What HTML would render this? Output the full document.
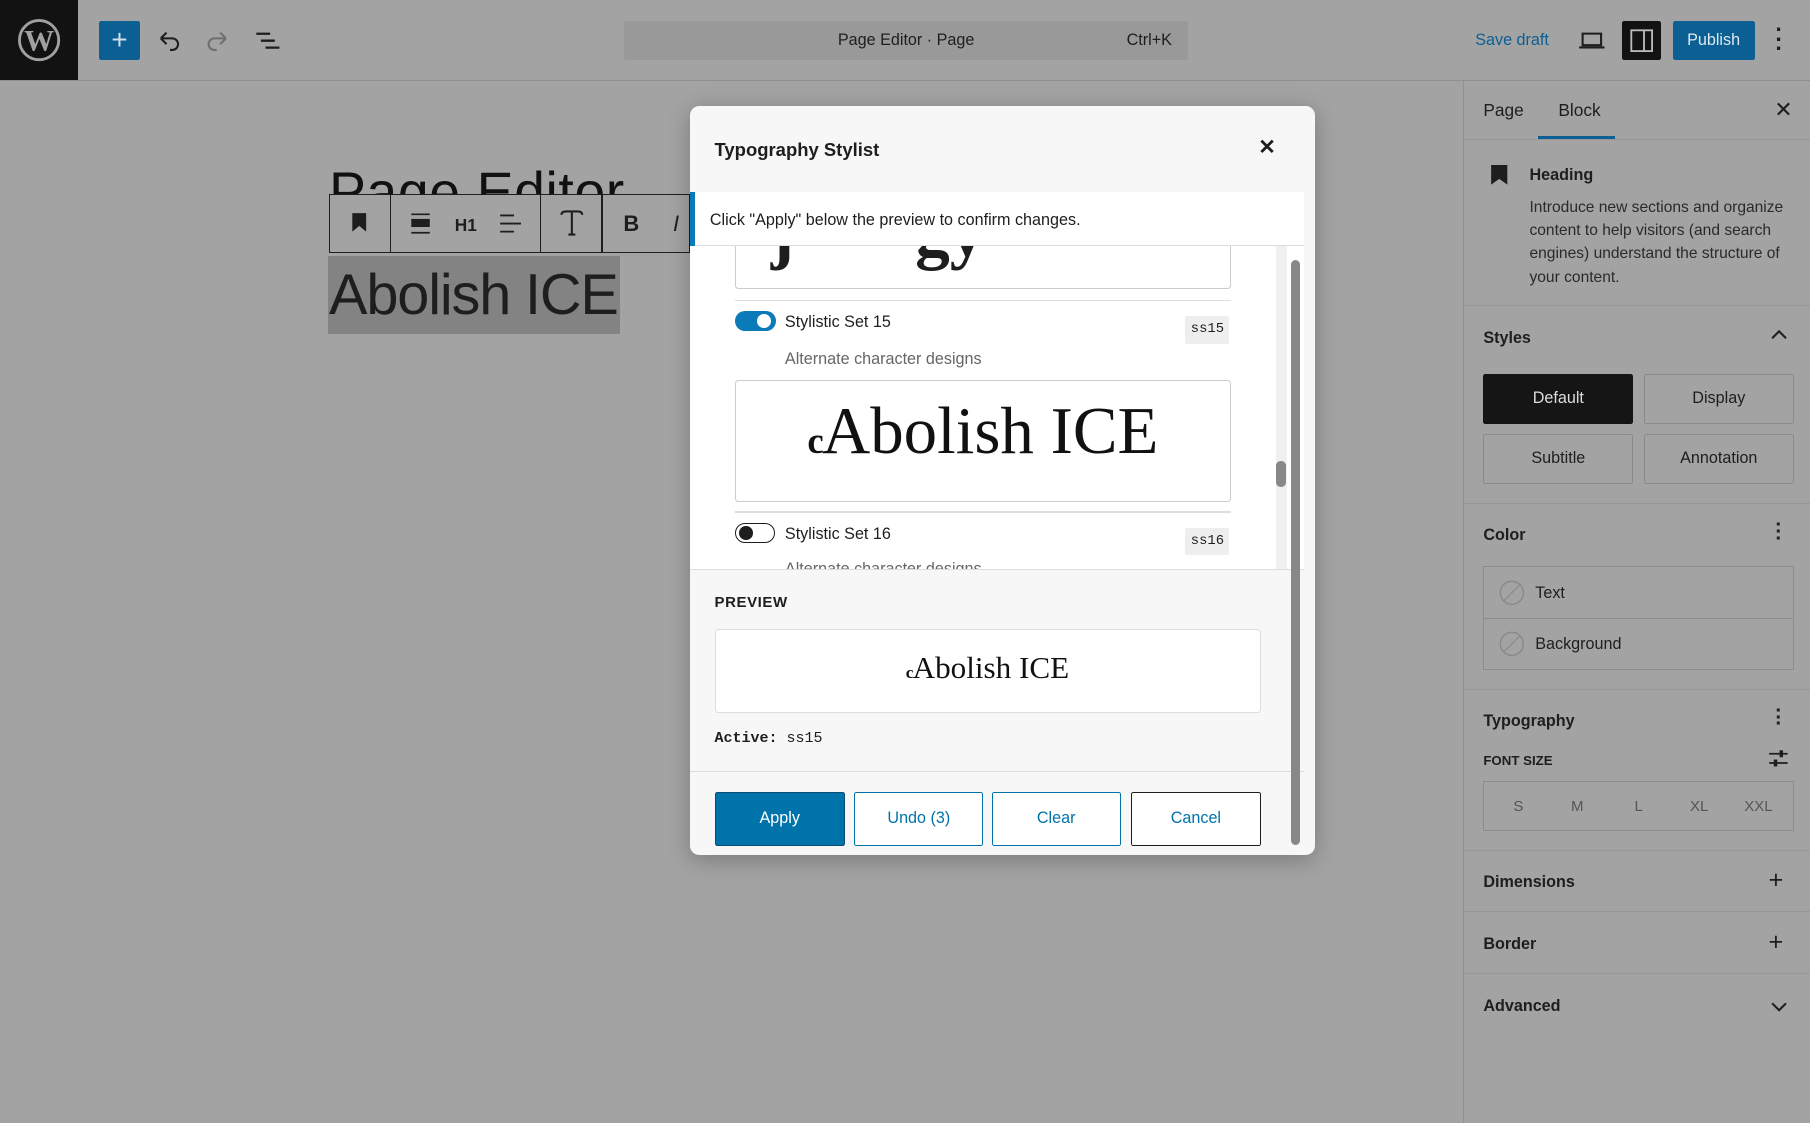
<!DOCTYPE html>
<html><head><meta charset="utf-8"><style>
html{zoom:1.154337}
body{margin:0;width:1568px;height:973px;overflow:hidden;background:#a3a3a3;font-family:"Liberation Sans",sans-serif;position:relative;color:#1e1e1e}
.a{position:absolute}
.t{font-size:14px}
.line{position:absolute;left:1268px;width:300px;height:1px;background:#979797}
.btn{position:absolute;box-sizing:border-box;border:1px solid #8a8a8a;border-radius:2px;text-align:center;font-size:14px;line-height:41px;height:43px}
.mb{position:absolute;box-sizing:border-box;height:47px;top:686px;font-size:14px;line-height:45px;text-align:center;border:1px solid #0073aa;color:#0073aa;border-radius:2px;background:#fff}
.sw{font-size:.55em;font-weight:bold;margin-right:-0.05em}
</style></head><body>
<div class="a" style="left:0;top:0;width:68px;height:69px;background:#121212"></div>
<svg class="a" style="left:14px;top:15px" width="40" height="40" viewBox="0 0 40 40"><circle cx="20" cy="20" r="17" fill="none" stroke="#a0a0a0" stroke-width="2.5"/><text x="20" y="29" text-anchor="middle" font-family="Liberation Serif" font-size="26" font-weight="bold" fill="#a0a0a0">W</text></svg>
<div class="a" style="left:0;top:69px;width:1568px;height:1px;background:#8f8f8f"></div>
<div class="a" style="left:86px;top:18px;width:35px;height:34px;background:#0b5f93;border-radius:2px;color:#cfe0ec;font-size:24px;text-align:center;line-height:33px">+</div>
<svg class="a" style="left:134px;top:24px" width="24" height="22"><path d="M5 9h10a5 5 0 0 1 0 10h-2M5 9l5-5M5 9l5 5" fill="none" stroke="#1e1e1e" stroke-width="1.8"/></svg>
<svg class="a" style="left:177px;top:24px" width="24" height="22"><path d="M19 9H9a5 5 0 0 0 0 10h2M19 9l-5-5M19 9l-5 5" fill="none" stroke="#6f6f6f" stroke-width="1.8"/></svg>
<svg class="a" style="left:220px;top:24px" width="26" height="22"><path d="M2 5h12M6 11h12M10 17h12" stroke="#1e1e1e" stroke-width="2"/></svg>
<div class="a" style="left:541px;top:18px;width:488px;height:34px;background:#999;border-radius:2px"></div>
<div class="a t" style="left:541px;top:27px;width:488px;text-align:center">Page Editor · Page</div>
<div class="a t" style="left:976px;top:27px">Ctrl+K</div>
<div class="a t" style="left:1278px;top:27px;color:#0b5f93">Save draft</div>
<svg class="a" style="left:1367px;top:25px" width="24" height="20"><path d="M4 4h16v10H4zM1 16h22" fill="none" stroke="#1e1e1e" stroke-width="1.8"/></svg>
<div class="a" style="left:1405px;top:18px;width:34px;height:34px;background:#121212;border-radius:2px"></div>
<svg class="a" style="left:1411px;top:24px" width="22" height="22"><rect x="2" y="2" width="18" height="18" fill="none" stroke="#bbb" stroke-width="1.6"/><path d="M13 2v18" stroke="#bbb" stroke-width="1.6"/></svg>
<div class="a" style="left:1449px;top:18px;width:71px;height:34px;background:#0b5f93;border-radius:2px;color:#dde8f0;font-size:14px;line-height:34px;text-align:center">Publish</div>
<div class="a" style="left:1538px;top:22px;font-size:20px;font-weight:bold;line-height:8px">·<br>·<br>·</div>

<div class="a" style="left:285px;top:140px;width:300px;height:30px;overflow:hidden"><div style="font-size:48px;line-height:52px;color:#111;letter-spacing:.5px">Page Editor</div></div>
<div class="a" style="left:285px;top:168px;width:313px;height:51px;border:1px solid #1e1e1e;box-sizing:border-box;background:#a3a3a3"></div>
<div class="a" style="left:338px;top:168px;width:1px;height:51px;background:#1e1e1e"></div>
<div class="a" style="left:468px;top:168px;width:1px;height:51px;background:#1e1e1e"></div>
<div class="a" style="left:521px;top:168px;width:1px;height:51px;background:#1e1e1e"></div>
<svg class="a" style="left:303px;top:184px" width="16" height="18"><path d="M2 1h12v16l-6-5-6 5z" fill="#1e1e1e"/></svg>
<svg class="a" style="left:354px;top:184px" width="20" height="20"><path d="M2 2h16M2 18h16" stroke="#1e1e1e" stroke-width="1.5"/><rect x="2" y="6" width="16" height="7" fill="#1e1e1e"/></svg>
<div class="a" style="left:394px;top:186px;font-size:15px;font-weight:bold">H1</div>
<svg class="a" style="left:432px;top:184px" width="20" height="20"><path d="M1 3h12M1 10h18M1 17h12" stroke="#1e1e1e" stroke-width="1.6"/></svg>
<svg class="a" style="left:483px;top:180px" width="24" height="26"><path d="M3 6q0-3 4-3h10q4 0 4 3M12 3v20M9 23h6" fill="none" stroke="#1e1e1e" stroke-width="1.8"/></svg>
<div class="a" style="left:540px;top:183px;font-size:19px;font-weight:bold">B</div>
<div class="a" style="left:583px;top:183px;font-size:19px;font-style:italic">I</div>
<div class="a" style="left:284px;top:222px;width:253px;height:67px;background:#838383"></div>
<div class="a" style="left:285px;top:226px;font-size:50px;line-height:60px;color:#1e1e1e;letter-spacing:-1px">Abolish ICE</div>

<div class="a" style="left:1267px;top:70px;width:1px;height:903px;background:#909090"></div>
<div class="a t" style="left:1285px;top:87px;font-size:15px">Page</div>
<div class="a t" style="left:1350px;top:87px;font-size:15px">Block</div>
<div class="a" style="left:1332px;top:118px;width:67px;height:2px;background:#0b5f93"></div>
<div class="a" style="left:1537px;top:84px;font-size:19px">✕</div>
<div class="line" style="top:120px"></div>
<svg class="a" style="left:1291px;top:143px" width="16" height="17"><path d="M1 0h14v17l-7-5-7 5z" fill="#1e1e1e"/></svg>
<div class="a" style="left:1325px;top:144px;font-size:14px;font-weight:bold">Heading</div>
<div class="a" style="left:1325px;top:170px;font-size:13.5px;line-height:20px;width:235px;color:#2a2a2a">Introduce new sections and organize content to help visitors (and search engines) understand the structure of your content.</div>
<div class="line" style="top:264px"></div>
<div class="a" style="left:1285px;top:285px;font-size:14px;font-weight:bold">Styles</div>
<svg class="a" style="left:1534px;top:285px" width="14" height="10"><path d="M1 8l6-6 6 6" fill="none" stroke="#1e1e1e" stroke-width="1.8"/></svg>
<div class="btn" style="left:1285px;top:324px;width:130px;background:#151515;color:#ddd;border-color:#151515">Default</div>
<div class="btn" style="left:1424px;top:324px;width:130px">Display</div>
<div class="btn" style="left:1285px;top:376px;width:130px">Subtitle</div>
<div class="btn" style="left:1424px;top:376px;width:130px">Annotation</div>
<div class="line" style="top:436px"></div>
<div class="a" style="left:1285px;top:456px;font-size:14px;font-weight:bold">Color</div>
<div class="a" style="left:1538px;top:452px;font-size:18px;font-weight:bold;line-height:6px">·<br>·<br>·</div>
<div class="a" style="left:1285px;top:490px;width:269px;height:90px;border:1px solid #8c8c8c;box-sizing:border-box"></div>
<div class="a" style="left:1286px;top:535px;width:267px;height:1px;background:#8c8c8c"></div>
<svg class="a" style="left:1298px;top:502px" width="24" height="24"><circle cx="12" cy="12" r="10" fill="none" stroke="#888" stroke-width="1.2"/><path d="M5 19L19 5" stroke="#888"/></svg>
<svg class="a" style="left:1298px;top:546px" width="24" height="24"><circle cx="12" cy="12" r="10" fill="none" stroke="#888" stroke-width="1.2"/><path d="M5 19L19 5" stroke="#888"/></svg>
<div class="a t" style="left:1330px;top:506px">Text</div>
<div class="a t" style="left:1330px;top:550px">Background</div>
<div class="line" style="top:597px"></div>
<div class="a" style="left:1285px;top:617px;font-size:14px;font-weight:bold">Typography</div>
<div class="a" style="left:1538px;top:613px;font-size:18px;font-weight:bold;line-height:6px">·<br>·<br>·</div>
<div class="a" style="left:1285px;top:652px;font-size:11.5px;font-weight:bold">FONT SIZE</div>
<svg class="a" style="left:1532px;top:648px" width="18" height="18"><path d="M1 5h16M1 13h16" stroke="#1e1e1e" stroke-width="1.5"/><rect x="10" y="2" width="3" height="6" fill="#1e1e1e"/><rect x="5" y="10" width="3" height="6" fill="#1e1e1e"/></svg>
<div class="a" style="left:1285px;top:677px;width:269px;height:43px;border:1px solid #8c8c8c;box-sizing:border-box"></div>
<div class="a" style="left:1311px;top:691px;font-size:13px;color:#555">S</div>
<div class="a" style="left:1361px;top:691px;font-size:13px;color:#555">M</div>
<div class="a" style="left:1416px;top:691px;font-size:13px;color:#555">L</div>
<div class="a" style="left:1464px;top:691px;font-size:13px;color:#555">XL</div>
<div class="a" style="left:1511px;top:691px;font-size:13px;color:#555">XXL</div>
<div class="line" style="top:736px"></div>
<div class="a" style="left:1285px;top:756px;font-size:14px;font-weight:bold">Dimensions</div>
<div class="a" style="left:1532px;top:750px;font-size:22px">+</div>
<div class="line" style="top:789px"></div>
<div class="a" style="left:1285px;top:810px;font-size:14px;font-weight:bold">Border</div>
<div class="a" style="left:1532px;top:804px;font-size:22px">+</div>
<div class="line" style="top:843px"></div>
<div class="a" style="left:1285px;top:864px;font-size:14px;font-weight:bold">Advanced</div>
<svg class="a" style="left:1534px;top:867px" width="14" height="10"><path d="M1 2l6 6 6-6" fill="none" stroke="#1e1e1e" stroke-width="1.8"/></svg>

<div class="a" style="left:598px;top:92px;width:541px;height:649px;background:#f7f7f7;border-radius:8px;box-shadow:0 4px 20px rgba(0,0,0,.25);overflow:hidden">
 <div class="a" style="left:21px;top:28px;font-size:16px;font-weight:bold">Typography Stylist</div>
 <div class="a" style="left:492px;top:25px;font-size:18px;font-weight:bold">✕</div>
 <div class="a" style="left:0;top:74px;width:532px;height:1px;background:#ddd"></div>
 <div class="a" style="left:0;top:121px;width:532px;height:281px;background:#fff"></div>
 <div class="a" style="left:39px;top:115px;width:429px;height:43px;border:1px solid #ccc;border-top:none;border-radius:0 0 3px 3px;box-sizing:border-box;overflow:hidden"><div style="position:absolute;left:30px;top:-40px;font-family:'Liberation Serif';font-size:60px;font-weight:bold">ȷ&nbsp;&nbsp;&nbsp;&nbsp;&nbsp;&nbsp;&nbsp;gy</div></div>
 <div class="a" style="left:39px;top:168px;width:429px;height:1px;background:#ddd"></div>
 <div class="a" style="left:39px;top:177px;width:35px;height:18px;border-radius:10px;background:#0b7ab8"></div>
 <div class="a" style="left:58px;top:180px;width:12px;height:12px;border-radius:50%;background:#fff"></div>
 <div class="a t" style="left:82px;top:179px">Stylistic Set 15</div>
 <div class="a" style="left:429px;top:182px;width:38px;height:24px;background:#eee;border-radius:2px;font-family:'Liberation Mono';font-size:12px;line-height:24px;text-align:center">ss15</div>
 <div class="a t" style="left:82px;top:211px;color:#666">Alternate character designs</div>
 <div class="a" style="left:39px;top:237px;width:429px;height:106px;border:1px solid #ccc;border-radius:3px;box-sizing:border-box;text-align:center;font-family:'Liberation Serif';font-size:58px;line-height:88px;color:#111"><span class="sw">c</span>Abolish ICE</div>
 <div class="a" style="left:39px;top:351px;width:429px;height:1px;background:#ddd"></div>
 <div class="a" style="left:39px;top:361px;width:33px;height:16px;border-radius:10px;border:1px solid #1e1e1e;background:#fff"></div>
 <div class="a" style="left:42px;top:364px;width:12px;height:12px;border-radius:50%;background:#1e1e1e"></div>
 <div class="a t" style="left:82px;top:363px">Stylistic Set 16</div>
 <div class="a" style="left:429px;top:365px;width:38px;height:24px;background:#eee;border-radius:2px;font-family:'Liberation Mono';font-size:12px;line-height:24px;text-align:center">ss16</div>
 <div class="a t" style="left:82px;top:393px;color:#666;height:8px;overflow:hidden">Alternate character designs</div>
 <div class="a" style="left:507px;top:121px;width:10px;height:281px;background:#f0f0f0"></div>
 <div class="a" style="left:507px;top:307px;width:9px;height:23px;background:#888;border-radius:4px"></div>
 <div class="a" style="left:0;top:74px;width:532px;height:47px;background:#fff;border-bottom:1px solid #ddd;box-sizing:border-box"></div>
 <div class="a" style="left:0;top:74px;width:4px;height:47px;background:#0b7ab8"></div>
 <div class="a t" style="left:17px;top:91px">Click "Apply" below the preview to confirm changes.</div>
 <div class="a" style="left:0;top:401px;width:532px;height:1px;background:#ddd"></div>
 <div class="a" style="left:21px;top:423px;font-size:13px;font-weight:bold;letter-spacing:.5px">PREVIEW</div>
 <div class="a" style="left:21px;top:453px;width:473px;height:73px;border:1px solid #ddd;border-radius:3px;background:#fff;box-sizing:border-box;text-align:center;font-family:'Liberation Serif';font-size:27px;line-height:66px;color:#111"><span class="sw">c</span>Abolish ICE</div>
 <div class="a" style="left:21px;top:540px;font-family:'Liberation Mono';font-size:13px"><b>Active:</b> ss15</div>
 <div class="a" style="left:0;top:576px;width:532px;height:1px;background:#ddd"></div>
 <div class="a" style="left:520px;top:133px;width:8px;height:507px;background:#888;border-radius:4px"></div>
</div>
<div class="mb" style="left:619px;width:113px;background:#0073aa;color:#fff;border-color:#0a4b78">Apply</div>
<div class="mb" style="left:740px;width:112px">Undo (3)</div>
<div class="mb" style="left:859px;width:112px">Clear</div>
<div class="mb" style="left:980px;width:112px;border-color:#1e1e1e">Cancel</div>
</body></html>
